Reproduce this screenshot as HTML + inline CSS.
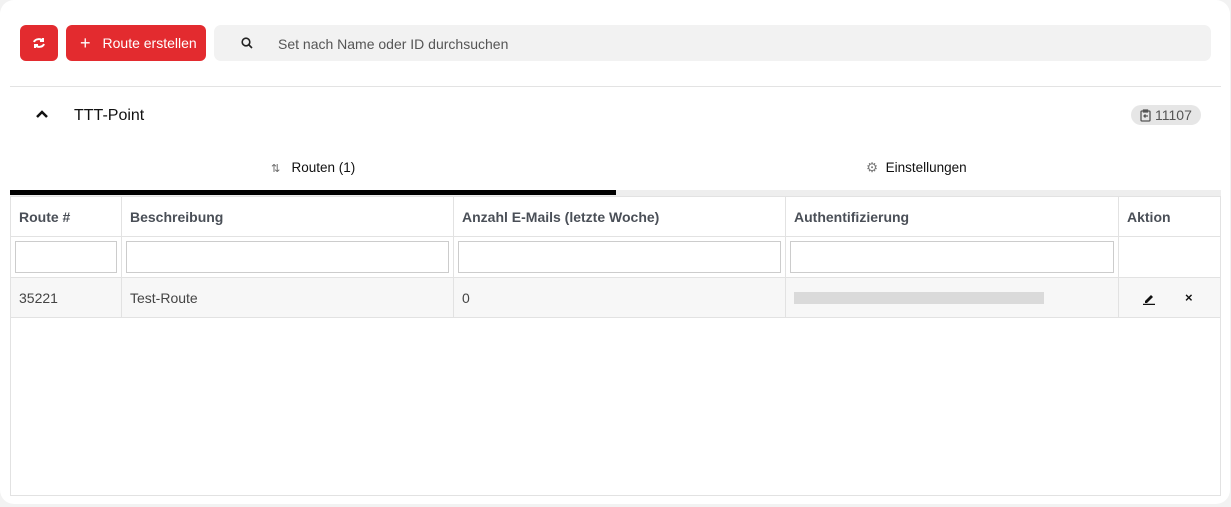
<!DOCTYPE html>
<html><head><style>
*{box-sizing:border-box;margin:0;padding:0}
body{width:1231px;height:507px;background:#f2f2f2;font-family:"Liberation Sans",sans-serif;position:relative;overflow:hidden}
.card{position:absolute;left:0;top:0;width:1230px;height:504px;background:#fff;border-radius:14px}
.btn{position:absolute;background:#e32b2f;border-radius:6px;color:#fff;font-size:14px;display:flex;align-items:center}
.search{position:absolute;left:214px;top:25px;width:997px;height:36px;background:#f2f2f2;border-radius:7px;font-size:14px;color:#555}
.abs{position:absolute}
table{position:absolute;left:10px;top:196px;width:1211px;border-collapse:collapse;font-size:14px;color:#444}
td,th{border:1px solid #e2e2e2;text-align:left;padding:0 8px}
th{height:40px;font-weight:bold;color:#4a4f57}
.f td{height:41px;padding:4px}
.f input{width:100%;height:32px;border:1px solid #ccc;display:block}
.d td{height:40px;background:#f7f7f7}
</style></head><body>
<div class="card">
<div class="btn" style="left:20px;top:25px;width:38px;height:36px;justify-content:center">
<svg width="14" height="14" viewBox="0 0 14 14" fill="none" stroke="#fff" stroke-width="2"><path d="M2 6a5 4 0 0 1 9-1M12 8a5 4 0 0 1-9 1"/><path d="M11 2v3H8M3 12V9h3"/></svg></div>
<div class="btn" style="left:66px;top:25px;width:140px;height:36px;padding-left:14px"><span style="font-size:18px;margin-right:12px">+</span>Route erstellen</div>
<div class="search"><svg class="abs" style="left:27px;top:12px" width="12" height="12" viewBox="0 0 12 12" fill="none" stroke="#222" stroke-width="1.6"><circle cx="5" cy="5" r="3.8"/><path d="M8 8l3 3"/></svg><span class="abs" style="left:64px;top:11px">Set nach Name oder ID durchsuchen</span></div>
<div class="abs" style="left:10px;top:86px;width:1211px;height:1px;background:#e3e3e3"></div>
<svg class="abs" style="left:36px;top:110px" width="12" height="9" viewBox="0 0 12 9"><path d="M1 7l5-5 5 5" stroke="#111" stroke-width="2.5" fill="none"/></svg>
<div class="abs" style="left:74px;top:107px;font-size:16px;color:#111">TTT-Point</div>
<div class="abs" style="left:1131px;top:105px;width:70px;height:20px;background:#e6e6e6;border-radius:10px;font-size:14px;color:#555;padding:2px 0 0 24px">11107<svg class="abs" style="left:9px;top:4px" width="11" height="13" viewBox="0 0 11 13" fill="none" stroke="#555" stroke-width="1.3"><rect x="1" y="2" width="9" height="10" rx="1"/><path d="M3.5 1h4v2h-4zM8 7H4M5.5 5.5L4 7l1.5 1.5"/></svg></div>
<div class="abs" style="left:271px;top:160px;font-size:13.5px;color:#111"><span style="color:#666;font-size:11px">⇅</span>&nbsp;&nbsp;&nbsp;Routen (1)</div>
<div class="abs" style="left:866px;top:160px;font-size:13.5px;color:#111"><span style="color:#777">⚙</span>&nbsp;&nbsp;Einstellungen</div>
<div class="abs" style="left:10px;top:190px;width:1211px;height:6px;background:#eee"></div>
<div class="abs" style="left:10px;top:190px;width:606px;height:5px;background:#000"></div>
<div class="abs" style="left:10px;top:196px;width:1211px;height:300px;border:1px solid #e2e2e2"></div>
<table>
<tr><th style="width:111px">Route #</th><th style="width:332px">Beschreibung</th><th style="width:332px">Anzahl E-Mails (letzte Woche)</th><th style="width:333px">Authentifizierung</th><th>Aktion</th></tr>
<tr class="f"><td><input></td><td><input></td><td><input></td><td><input></td><td></td></tr>
<tr class="d"><td>35221</td><td>Test-Route</td><td>0</td><td><div style="width:250px;height:12px;background:#d2d2d2;opacity:.8"></div></td><td style="position:relative"><svg class="abs" style="left:24px;top:14px" width="12" height="13" viewBox="0 0 12 13"><path d="M2 9l6-6 2 2-6 6H2z" fill="#111"/><path d="M0 12.5h12" stroke="#111" stroke-width="1.5"/></svg><span class="abs" style="left:66px;top:12px;font-size:13px;color:#111;font-weight:bold">×</span></td></tr>
</table>
</div>
</body></html>
